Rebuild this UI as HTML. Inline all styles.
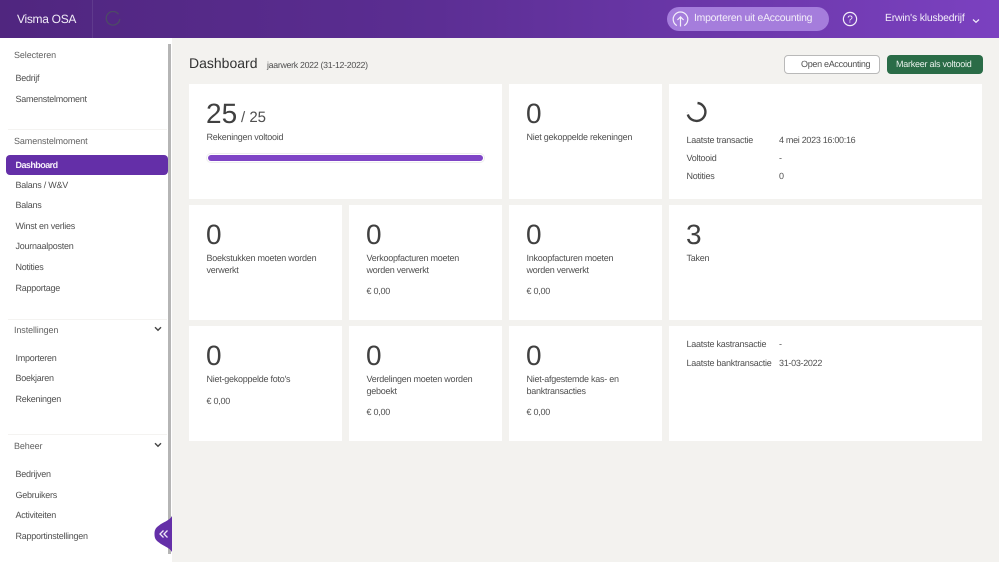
<!DOCTYPE html>
<html><head><meta charset="utf-8"><style>
*{box-sizing:border-box}
html,body{margin:0;padding:0;width:999px;height:562px;overflow:hidden;background:#f3f2ef;font-family:"Liberation Sans",sans-serif;color:#494949;text-rendering:geometricPrecision}
.t{position:absolute;white-space:nowrap;font-size:9px;line-height:12px;letter-spacing:-.25px;color:#505050;filter:blur(.25px)}
.c{position:absolute;background:#fff}
.n{position:absolute;white-space:nowrap;font-size:28px;line-height:36px;color:#404040;filter:blur(.25px)}
.h{color:#636363;letter-spacing:-.1px}
.line{position:absolute;left:8px;width:159px;height:1px;background:#f4f3f1}
</style></head><body>
<div style="position:absolute;left:0;top:0;width:999px;height:38px;background:linear-gradient(90deg,#50267f 0%,#5a2d91 40%,#7b41c0 100%)"></div>
<div style="position:absolute;left:92px;top:0;width:1px;height:38px;background:#5f3a8d"></div>
<div class="t" style="left:17px;top:11px;font-size:12px;line-height:16px;letter-spacing:-.3px;color:#f1ecf7">Visma OSA</div>
<svg style="position:absolute;left:105px;top:11px" width="16" height="16" viewBox="0 0 16 16" fill="none"><path d="M13.5 3.2A6.8 6.8 0 1 0 14.8 8" stroke="#4d4a66" stroke-width="1.3"/></svg>
<div style="position:absolute;left:667px;top:7px;width:162px;height:24px;border-radius:12px;background:#a57ddc"></div>
<svg style="position:absolute;left:672px;top:11px" width="17" height="17" viewBox="0 0 17 17" fill="none" stroke="#f3eefa" stroke-width="1.2"><path d="M4.8 14.6A7.3 7.3 0 1 1 12.2 14.6"/><path d="M8.5 15.5V6M5.4 9L8.5 5.9 11.6 9"/></svg>
<div class="t" style="left:694px;top:12px;font-size:10.4px;line-height:14px;letter-spacing:-.23px;color:#f3eefa">Importeren uit eAccounting</div>
<svg style="position:absolute;left:842px;top:11px" width="16" height="16" viewBox="0 0 16 16" fill="none"><circle cx="8" cy="8" r="6.6" stroke="#f3eefa" stroke-width="1.2"/><text x="8" y="11.4" text-anchor="middle" font-size="10" font-family="Liberation Sans" fill="#f3eefa">?</text></svg>
<div class="t" style="left:885px;top:12px;font-size:10.4px;line-height:14px;letter-spacing:-.17px;color:#f3eefa">Erwin's klusbedrijf</div>
<svg style="position:absolute;left:972px;top:18px" width="8" height="6" viewBox="0 0 8 6" fill="none"><path d="M1 1.5L4 4.3 7 1.5" stroke="#f3eefa" stroke-width="1.2"/></svg>

<div style="position:absolute;left:0;top:38px;width:172px;height:524px;background:#fff"></div>
<div style="position:absolute;left:168px;top:44px;width:3px;height:510px;background:#b5b5b5"></div>

<div class="t h" style="left:14px;top:49px">Selecteren</div>
<div class="t" style="left:15.500px;top:72px">Bedrijf</div>
<div class="t" style="left:15.500px;top:93px">Samenstelmoment</div>
<div class="line" style="top:129px"></div>
<div class="t h" style="left:14px;top:135px">Samenstelmoment</div>
<div style="position:absolute;left:6px;top:155px;width:162px;height:19.500px;border-radius:4px;background:#642fa8"></div>
<div class="t" style="left:15.500px;top:159px;color:#f5f0fa;font-weight:bold;letter-spacing:-.55px">Dashboard</div>
<div class="t" style="left:15.500px;top:179px">Balans / W&amp;V</div>
<div class="t" style="left:15.500px;top:199px">Balans</div>
<div class="t" style="left:15.500px;top:220px">Winst en verlies</div>
<div class="t" style="left:15.500px;top:240px">Journaalposten</div>
<div class="t" style="left:15.500px;top:261px">Notities</div>
<div class="t" style="left:15.500px;top:282px">Rapportage</div>
<div class="line" style="top:319px"></div>
<div class="t h" style="left:14px;top:324px">Instellingen</div>
<svg style="position:absolute;left:154px;top:326px" width="8" height="6" viewBox="0 0 8 6" fill="none"><path d="M1 1.200L4 4.200 7 1.200" stroke="#444" stroke-width="1.400"/></svg>
<div class="t" style="left:15.500px;top:352px">Importeren</div>
<div class="t" style="left:15.500px;top:372px">Boekjaren</div>
<div class="t" style="left:15.500px;top:393px">Rekeningen</div>
<div class="line" style="top:434px"></div>
<div class="t h" style="left:14px;top:440px">Beheer</div>
<svg style="position:absolute;left:154px;top:442px" width="8" height="6" viewBox="0 0 8 6" fill="none"><path d="M1 1.200L4 4.200 7 1.200" stroke="#444" stroke-width="1.400"/></svg>
<div class="t" style="left:15.500px;top:468px">Bedrijven</div>
<div class="t" style="left:15.500px;top:489px">Gebruikers</div>
<div class="t" style="left:15.500px;top:509px">Activiteiten</div>
<div class="t" style="left:15.500px;top:530px">Rapportinstellingen</div>
<svg style="position:absolute;left:154px;top:516px" width="18" height="36" viewBox="0 0 18 36"><path d="M18 0C15 5 9 6 5 9.500C1 12 .5 15 .5 18C.5 21 1 24 5 26.500C9 30 15 31 18 36Z" fill="#642fa8"/><path d="M9.500 14.500L6 18 9.500 21.500M13.500 14.500L10 18 13.500 21.500" fill="none" stroke="#efe7f8" stroke-width="1.300"/></svg>

<div class="t" style="left:189px;top:54px;font-size:14px;line-height:18px;letter-spacing:0;color:#333">Dashboard</div>
<div class="t" style="left:267px;top:59px;font-size:8.800px;letter-spacing:-.3px">jaarwerk 2022 (31-12-2022)</div>
<div style="position:absolute;left:784px;top:55px;width:96px;height:18.500px;border:1px solid #b9b9b9;border-radius:4px;background:#fff"></div>
<div class="t" style="left:801px;top:58px;letter-spacing:-.3px">Open eAccounting</div>
<div style="position:absolute;left:886.500px;top:55px;width:96px;height:18.500px;border-radius:4px;background:#2a6c47"></div>
<div class="t" style="left:896px;top:58px;color:#e9f1ec">Markeer als voltooid</div>

<div class="c" style="left:189px;top:84px;width:313px;height:115px"></div>
<div class="c" style="left:509px;top:84px;width:153px;height:115px"></div>
<div class="c" style="left:669px;top:84px;width:313px;height:115px"></div>
<div class="c" style="left:189px;top:205px;width:153px;height:115px"></div>
<div class="c" style="left:349px;top:205px;width:153px;height:115px"></div>
<div class="c" style="left:509px;top:205px;width:153px;height:115px"></div>
<div class="c" style="left:669px;top:205px;width:313px;height:115px"></div>
<div class="c" style="left:189px;top:326px;width:153px;height:115px"></div>
<div class="c" style="left:349px;top:326px;width:153px;height:115px"></div>
<div class="c" style="left:509px;top:326px;width:153px;height:115px"></div>
<div class="c" style="left:669px;top:326px;width:313px;height:115px"></div>

<div class="n" style="left:206px;top:96px">25</div>
<div class="t" style="left:241px;top:109px;font-size:15px;line-height:18px;letter-spacing:0">/ 25</div>
<div class="t" style="left:206.500px;top:131px">Rekeningen voltooid</div>
<div style="position:absolute;left:206px;top:153px;width:279px;height:10px;border:1px solid #eeeeee;border-radius:5px;background:#fff"></div>
<div style="position:absolute;left:208px;top:155px;width:275px;height:6px;border-radius:3px;background:#7f45c6"></div>

<div class="n" style="left:526px;top:96px">0</div>
<div class="t" style="left:526.500px;top:131px">Niet gekoppelde rekeningen</div>

<svg style="position:absolute;left:685px;top:101px" width="23" height="23" viewBox="0 0 23 23" fill="none"><path d="M12.500 2A9 9 0 1 1 2.800 13.500" stroke="#3f3f3f" stroke-width="2.400"/><path d="M2.300 11.500v.1" stroke="#3f3f3f" stroke-width="1.500"/></svg>
<div class="t" style="left:686.500px;top:134px">Laatste transactie</div>
<div class="t" style="left:779px;top:134px;letter-spacing:-.3px">4 mei 2023 16:00:16</div>
<div class="t" style="left:686.500px;top:152px">Voltooid</div>
<div class="t" style="left:779px;top:152px">-</div>
<div class="t" style="left:686.500px;top:170px">Notities</div>
<div class="t" style="left:779px;top:170px">0</div>

<div class="n" style="left:206px;top:217px">0</div>
<div class="t" style="left:206.500px;top:252px">Boekstukken moeten worden</div>
<div class="t" style="left:206.500px;top:264px">verwerkt</div>
<div class="n" style="left:366px;top:217px">0</div>
<div class="t" style="left:366.500px;top:252px">Verkoopfacturen moeten</div>
<div class="t" style="left:366.500px;top:264px">worden verwerkt</div>
<div class="t" style="left:366.500px;top:285px">€ 0,00</div>
<div class="n" style="left:526px;top:217px">0</div>
<div class="t" style="left:526.500px;top:252px">Inkoopfacturen moeten</div>
<div class="t" style="left:526.500px;top:264px">worden verwerkt</div>
<div class="t" style="left:526.500px;top:285px">€ 0,00</div>
<div class="n" style="left:686px;top:217px">3</div>
<div class="t" style="left:686.500px;top:252px">Taken</div>

<div class="n" style="left:206px;top:338px">0</div>
<div class="t" style="left:206.500px;top:373px">Niet-gekoppelde foto's</div>
<div class="t" style="left:206.500px;top:395px">€ 0,00</div>
<div class="n" style="left:366px;top:338px">0</div>
<div class="t" style="left:366.500px;top:373px">Verdelingen moeten worden</div>
<div class="t" style="left:366.500px;top:385px">geboekt</div>
<div class="t" style="left:366.500px;top:406px">€ 0,00</div>
<div class="n" style="left:526px;top:338px">0</div>
<div class="t" style="left:526.500px;top:373px">Niet-afgestemde kas- en</div>
<div class="t" style="left:526.500px;top:385px">banktransacties</div>
<div class="t" style="left:526.500px;top:406px">€ 0,00</div>
<div class="t" style="left:686.500px;top:338px">Laatste kastransactie</div>
<div class="t" style="left:779px;top:338px">-</div>
<div class="t" style="left:686.500px;top:357px">Laatste banktransactie</div>
<div class="t" style="left:779px;top:357px;letter-spacing:-.3px">31-03-2022</div>
</body></html>
